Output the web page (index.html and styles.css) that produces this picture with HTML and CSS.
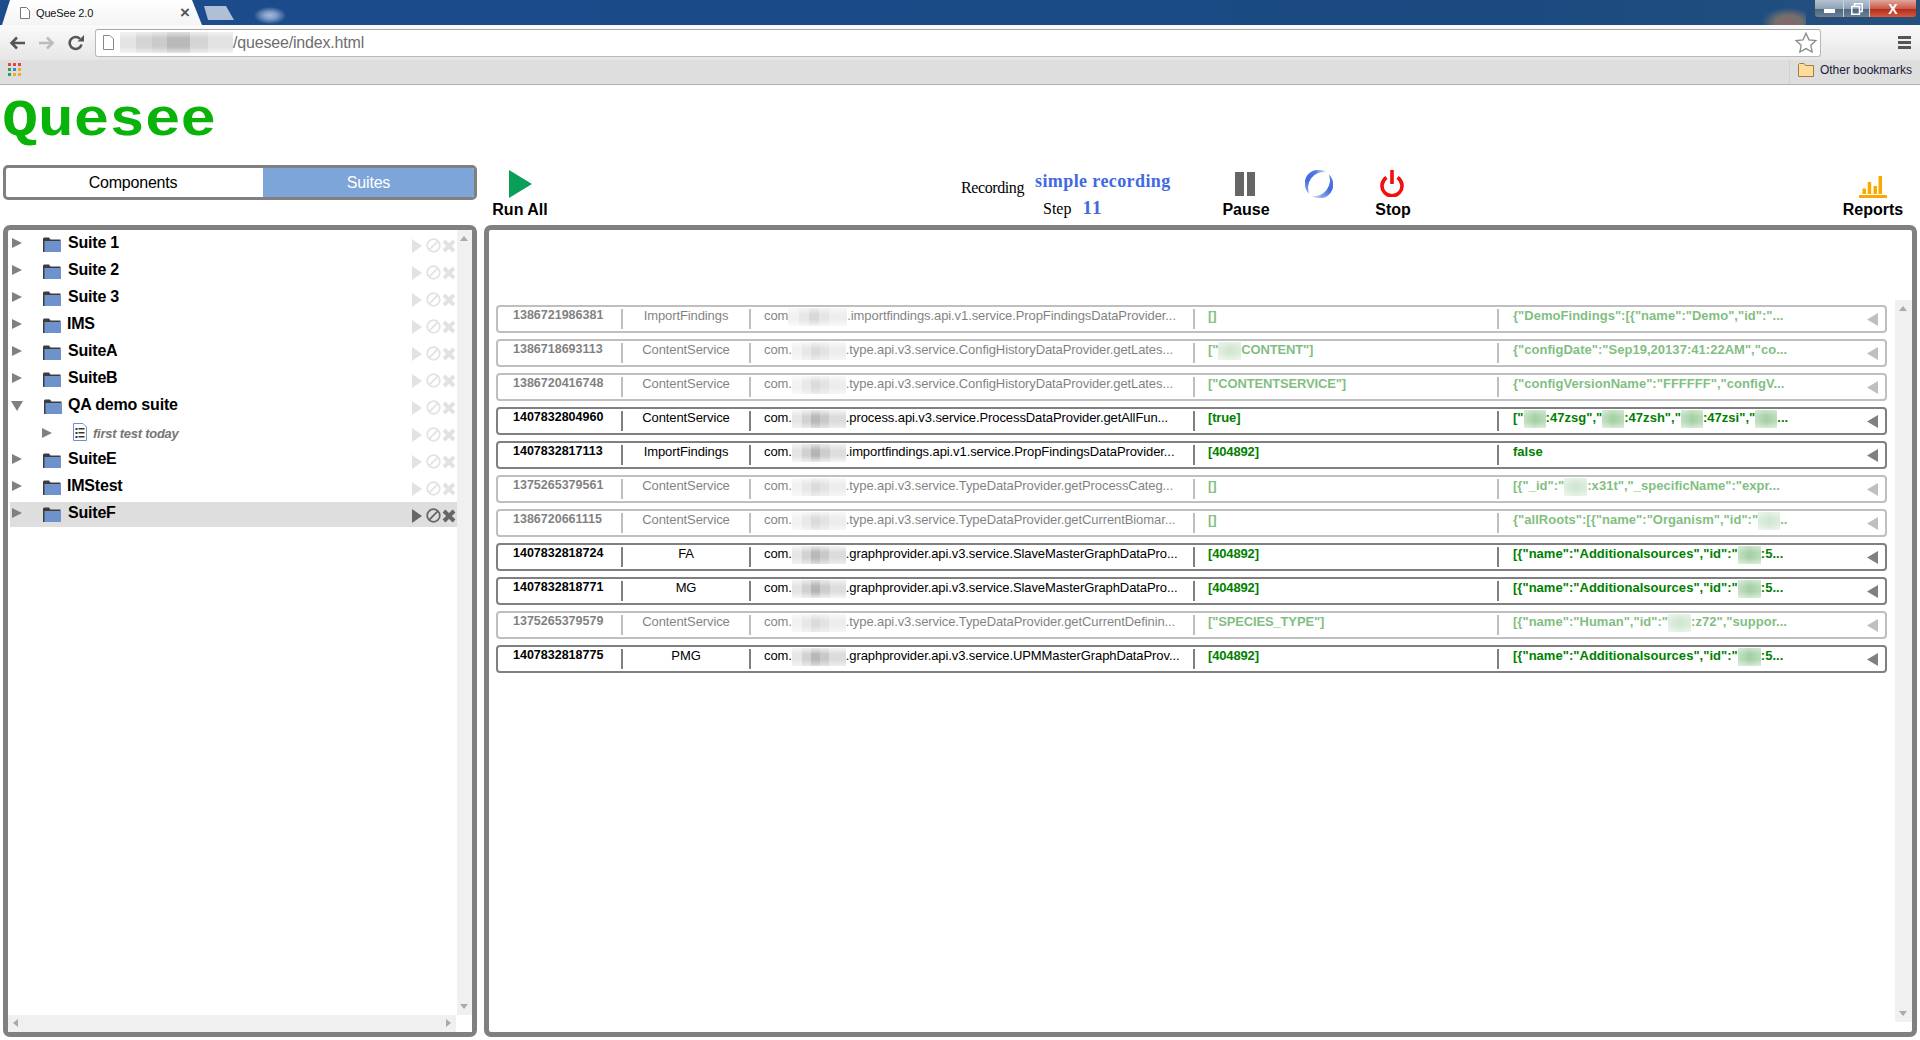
FILE: index.html
```html
<!DOCTYPE html>
<html lang="en">
<head>
<meta charset="utf-8">
<title>QueSee 2.0</title>
<link rel="stylesheet" href="styles.css">
</head>
<body>
<svg class="defs" width="0" height="0" aria-hidden="true">
  <defs>
    <symbol id="folder" viewBox="0 0 18 15"><path fill="#3d3d3d" d="M0 15V1.5L1 0.5H6L7.5 2.5H17.5V4H2V15z"/><rect x="1.5" y="4" width="16.500" height="11" fill="#6d92cc"/></symbol>
    <symbol id="doc" viewBox="0 0 14 18"><path fill="#fff" stroke="#6d92cc" d="M.5.5H10L13.500 4V17.500H.5z"/><path fill="#333" d="M2.500 5h2v2h-2zM5.500 5h6v1.500h-6zM2.500 9h2v2h-2zM5.500 9h6v1.500h-6zM2.500 13h2v2h-2zM5.500 13h6v1.500h-6z"/></symbol>
    <symbol id="a-play" viewBox="0 0 10 14"><path fill="currentColor" d="M0 0L10 7L0 14z"/></symbol>
    <symbol id="a-ban" viewBox="0 0 15 15"><circle cx="7.500" cy="7.500" r="6.300" fill="none" stroke="currentColor" stroke-width="1.800"/><path d="M3.200 11.800L11.800 3.200" stroke="currentColor" stroke-width="1.800"/></symbol>
    <symbol id="a-x" viewBox="0 0 14 14"><path d="M2 2L12 12M12 2L2 12" stroke="currentColor" stroke-width="4"/></symbol>
    <symbol id="collapse" viewBox="0 0 11 13"><path fill="currentColor" d="M11 0V13L0 6.500z"/></symbol>
    <linearGradient id="spinA" x1="0" y1="1" x2="1" y2="0"><stop offset="0" stop-color="#4169e1" stop-opacity=".5"/><stop offset=".35" stop-color="#4169e1"/><stop offset=".7" stop-color="#4169e1" stop-opacity=".9"/><stop offset="1" stop-color="#4169e1" stop-opacity=".15"/></linearGradient>
    <linearGradient id="spinB" x1="1" y1="0" x2="0" y2="1"><stop offset="0" stop-color="#4169e1" stop-opacity=".85"/><stop offset=".4" stop-color="#4169e1"/><stop offset=".75" stop-color="#4169e1" stop-opacity=".6"/><stop offset="1" stop-color="#4169e1" stop-opacity=".12"/></linearGradient>
  </defs>
</svg>

<header class="browser">
  <div class="titlebar">
    <div class="tab">
      <svg class="tab-page" viewBox="0 0 10 12"><path fill="#fff" stroke="#777" d="M.5.5H6.500L9.500 3.500V11.500H.5z"/></svg>
      <span class="tab-title">QueSee 2.0</span>
      <span class="tab-close">×</span>
    </div>
    <div class="newtab"></div>
    <div class="title-blur"></div>
    <div class="title-glow"></div>
    <div class="winbtns">
      <span class="win win-min"></span>
      <span class="win win-max"><svg viewBox="0 0 12 12" width="12" height="12"><path fill="none" stroke="#fff" stroke-width="1.500" d="M3.500 3V.8H11.200V8.500H9M.8 3.500H8.500V11.200H.8z"/></svg></span>
      <span class="win win-close">X</span>
    </div>
  </div>
  <div class="toolbar">
    <svg class="nav" viewBox="0 0 16 14"><path fill="none" stroke="#555" stroke-width="2.600" d="M16 7H3M8 1.500L2.500 7L8 12.500"/></svg>
    <svg class="nav nav-fwd" viewBox="0 0 16 14"><path fill="none" stroke="#bcbcbc" stroke-width="2.600" d="M0 7H13M8 1.500L13.500 7L8 12.500"/></svg>
    <svg class="nav nav-reload" viewBox="0 0 16 16"><path fill="none" stroke="#555" stroke-width="2.600" d="M13.500 9.500A6 6 0 1 1 12 3.800"/><path fill="#555" d="M9.500 6.500H16V0z"/></svg>
    <div class="omnibox">
      <svg class="omni-page" viewBox="0 0 11 15"><path fill="#fff" stroke="#888" d="M.5.500H7L10.500 4V14.500H.5z"/></svg>
      <span class="url-blur"></span>
      <span class="url">/quesee/index.html</span>
      <svg class="star" viewBox="0 0 22 21"><path fill="#fff" stroke="#8a8a8a" stroke-width="1.300" d="M11 1.200L14 7.800L21 8.600L15.800 13.300L17.200 20L11 16.600L4.800 20L6.200 13.300L1 8.600L8 7.800z"/></svg>
    </div>
    <div class="menu"><i></i><i></i><i></i></div>
  </div>
  <div class="bookmarks">
    <div class="apps"><i class="r"></i><i class="r"></i><i class="r"></i><i class="g"></i><i class="b"></i><i class="y"></i><i class="g"></i><i class="y"></i><i class="y"></i></div>
    <div class="other">
      <svg class="bm-folder" viewBox="0 0 16 14"><path fill="#ffdc9a" stroke="#a67c3c" d="M.5 13.500V1.500L1.500.5H6L7.500 2.500H15.500V13.500z"/></svg>
      <span>Other bookmarks</span>
    </div>
  </div>
</header>

<main class="app">
  <div class="logo">Quesee</div>

  <div class="controls">
    <div class="switch">
      <div class="sw sw-on">Components</div>
      <div class="sw sw-active">Suites</div>
    </div>
    <div class="action act-run">
      <svg class="ic-run" viewBox="0 0 23 28"><path fill="#0a9f58" d="M0 0L23 14L0 28z"/></svg>
      <span>Run All</span>
    </div>
    <div class="recording">
      <div class="rec-line"><span class="rec-label">Recording</span><span class="rec-value">simple recording</span></div>
      <div class="rec-line rec-step"><span class="rec-label">Step</span><span class="rec-value">11</span></div>
    </div>
    <div class="action act-pause">
      <svg class="ic-pause" viewBox="0 0 20 24"><path fill="#666" d="M0 0H9V24H0zM12 0H20V24H12z"/></svg>
      <span>Pause</span>
    </div>
    <div class="spinner">
      <svg viewBox="0 0 28 28" width="28" height="28"><path fill="url(#spinA)" d="M4.200 23.800A13.800 13.800 0 0 1 21 2A16 16 0 0 0 4.200 23.800z"/><path fill="url(#spinB)" d="M23.800 4.200A13.800 13.800 0 0 1 7 26A16 16 0 0 0 23.800 4.200z"/></svg>
    </div>
    <div class="action act-stop">
      <svg class="ic-stop" viewBox="0 0 24 27"><path fill="none" stroke="#f40f0f" stroke-width="3.600" d="M6.500 7.500A10 10 0 1 0 17.500 7.500"/><path stroke="#f40f0f" stroke-width="3.600" d="M12 0V14"/></svg>
      <span>Stop</span>
    </div>
    <div class="action act-reports">
      <svg class="ic-reports" viewBox="0 0 28 22"><path fill="#fca800" d="M3.500 12.500H7V18H3.500zM8.700 6H12.200V18H8.700zM14.500 10H18V18H14.500zM19.500 0H23V18H19.500zM0 19H28V22H0z"/></svg>
      <span>Reports</span>
    </div>
  </div>

  <div class="panels">
    <section class="panel tree-panel">
      <div class="tree-body">
        <div class="tree">
          <div class="node"><span class="tog"></span><svg class="fold"><use href="#folder"/></svg><span class="label">Suite 1</span><span class="acts"><svg class="a1"><use href="#a-play"/></svg><svg class="a2"><use href="#a-ban"/></svg><svg class="a3"><use href="#a-x"/></svg></span></div>
          <div class="node"><span class="tog"></span><svg class="fold"><use href="#folder"/></svg><span class="label">Suite 2</span><span class="acts"><svg class="a1"><use href="#a-play"/></svg><svg class="a2"><use href="#a-ban"/></svg><svg class="a3"><use href="#a-x"/></svg></span></div>
          <div class="node"><span class="tog"></span><svg class="fold"><use href="#folder"/></svg><span class="label">Suite 3</span><span class="acts"><svg class="a1"><use href="#a-play"/></svg><svg class="a2"><use href="#a-ban"/></svg><svg class="a3"><use href="#a-x"/></svg></span></div>
          <div class="node"><span class="tog"></span><svg class="fold"><use href="#folder"/></svg><span class="label label-n">IMS</span><span class="acts"><svg class="a1"><use href="#a-play"/></svg><svg class="a2"><use href="#a-ban"/></svg><svg class="a3"><use href="#a-x"/></svg></span></div>
          <div class="node"><span class="tog"></span><svg class="fold"><use href="#folder"/></svg><span class="label">SuiteA</span><span class="acts"><svg class="a1"><use href="#a-play"/></svg><svg class="a2"><use href="#a-ban"/></svg><svg class="a3"><use href="#a-x"/></svg></span></div>
          <div class="node"><span class="tog"></span><svg class="fold"><use href="#folder"/></svg><span class="label">SuiteB</span><span class="acts"><svg class="a1"><use href="#a-play"/></svg><svg class="a2"><use href="#a-ban"/></svg><svg class="a3"><use href="#a-x"/></svg></span></div>
          <div class="node"><span class="tog tog-open"></span><svg class="fold"><use href="#folder"/></svg><span class="label label-n">QA demo suite</span><span class="acts"><svg class="a1"><use href="#a-play"/></svg><svg class="a2"><use href="#a-ban"/></svg><svg class="a3"><use href="#a-x"/></svg></span></div>
          <div class="node node-child"><span class="tog"></span><svg class="docic"><use href="#doc"/></svg><span class="label-child">first test today</span><span class="acts"><svg class="a1"><use href="#a-play"/></svg><svg class="a2"><use href="#a-ban"/></svg><svg class="a3"><use href="#a-x"/></svg></span></div>
          <div class="node"><span class="tog"></span><svg class="fold"><use href="#folder"/></svg><span class="label">SuiteE</span><span class="acts"><svg class="a1"><use href="#a-play"/></svg><svg class="a2"><use href="#a-ban"/></svg><svg class="a3"><use href="#a-x"/></svg></span></div>
          <div class="node"><span class="tog"></span><svg class="fold"><use href="#folder"/></svg><span class="label label-n">IMStest</span><span class="acts"><svg class="a1"><use href="#a-play"/></svg><svg class="a2"><use href="#a-ban"/></svg><svg class="a3"><use href="#a-x"/></svg></span></div>
          <div class="node node-sel"><span class="tog"></span><svg class="fold"><use href="#folder"/></svg><span class="label">SuiteF</span><span class="acts"><svg class="a1"><use href="#a-play"/></svg><svg class="a2"><use href="#a-ban"/></svg><svg class="a3"><use href="#a-x"/></svg></span></div>
        </div>
        <div class="vscroll"><i class="up"></i><i class="down"></i></div>
      </div>
      <div class="tree-foot">
        <div class="hscroll"><i class="left"></i><i class="right"></i></div>
        <div class="corner"></div>
      </div>
    </section>

    <section class="panel log-panel">
      <div class="log">
        <div class="row off"><div class="c c-id">1386721986381</div><div class="c c-svc">ImportFindings</div><div class="c c-m">com<span class="bl bl-1 bl-wide"></span>.importfindings.api.v1.service.PropFindingsDataProvider...</div><div class="c c-p">[]</div><div class="c c-r">{"DemoFindings":[{"name":"Demo","id":"...</div><svg class="col"><use href="#collapse"/></svg></div>
        <div class="row off"><div class="c c-id">1386718693113</div><div class="c c-svc">ContentService</div><div class="c c-m">com.<span class="bl bl-2"></span>.type.api.v3.service.ConfigHistoryDataProvider.getLates...</div><div class="c c-p">["<span class="bg"></span>CONTENT"]</div><div class="c c-r">{"configDate":"Sep19,20137:41:22AM","co...</div><svg class="col"><use href="#collapse"/></svg></div>
        <div class="row off"><div class="c c-id">1386720416748</div><div class="c c-svc">ContentService</div><div class="c c-m">com.<span class="bl bl-2"></span>.type.api.v3.service.ConfigHistoryDataProvider.getLates...</div><div class="c c-p">["CONTENTSERVICE"]</div><div class="c c-r">{"configVersionName":"FFFFFF","configV...</div><svg class="col"><use href="#collapse"/></svg></div>
        <div class="row"><div class="c c-id">1407832804960</div><div class="c c-svc">ContentService</div><div class="c c-m">com.<span class="bl bl-2"></span>.process.api.v3.service.ProcessDataProvider.getAllFun...</div><div class="c c-p">[true]</div><div class="c c-r">["<span class="bg bg-s"></span>:47zsg","<span class="bg bg-s"></span>:47zsh","<span class="bg bg-s"></span>:47zsi","<span class="bg bg-s"></span>...</div><svg class="col"><use href="#collapse"/></svg></div>
        <div class="row"><div class="c c-id">1407832817113</div><div class="c c-svc">ImportFindings</div><div class="c c-m">com.<span class="bl bl-1"></span>.importfindings.api.v1.service.PropFindingsDataProvider...</div><div class="c c-p">[404892]</div><div class="c c-r">false</div><svg class="col"><use href="#collapse"/></svg></div>
        <div class="row off"><div class="c c-id">1375265379561</div><div class="c c-svc">ContentService</div><div class="c c-m">com.<span class="bl bl-2"></span>.type.api.v3.service.TypeDataProvider.getProcessCateg...</div><div class="c c-p">[]</div><div class="c c-r">[{"_id":"<span class="bg"></span>:x31t","_specificName":"expr...</div><svg class="col"><use href="#collapse"/></svg></div>
        <div class="row off"><div class="c c-id">1386720661115</div><div class="c c-svc">ContentService</div><div class="c c-m">com.<span class="bl bl-2"></span>.type.api.v3.service.TypeDataProvider.getCurrentBiomar...</div><div class="c c-p">[]</div><div class="c c-r">{"allRoots":[{"name":"Organism","id":"<span class="bg bg-s"></span>..</div><svg class="col"><use href="#collapse"/></svg></div>
        <div class="row"><div class="c c-id">1407832818724</div><div class="c c-svc">FA</div><div class="c c-m">com.<span class="bl bl-2"></span>.graphprovider.api.v3.service.SlaveMasterGraphDataPro...</div><div class="c c-p">[404892]</div><div class="c c-r">[{"name":"Additionalsources","id":"<span class="bg"></span>:5...</div><svg class="col"><use href="#collapse"/></svg></div>
        <div class="row"><div class="c c-id">1407832818771</div><div class="c c-svc">MG</div><div class="c c-m">com.<span class="bl bl-1"></span>.graphprovider.api.v3.service.SlaveMasterGraphDataPro...</div><div class="c c-p">[404892]</div><div class="c c-r">[{"name":"Additionalsources","id":"<span class="bg"></span>:5...</div><svg class="col"><use href="#collapse"/></svg></div>
        <div class="row off"><div class="c c-id">1375265379579</div><div class="c c-svc">ContentService</div><div class="c c-m">com.<span class="bl bl-2"></span>.type.api.v3.service.TypeDataProvider.getCurrentDefinin...</div><div class="c c-p">["SPECIES_TYPE"]</div><div class="c c-r">[{"name":"Human","id":"<span class="bg"></span>:z72","suppor...</div><svg class="col"><use href="#collapse"/></svg></div>
        <div class="row"><div class="c c-id">1407832818775</div><div class="c c-svc">PMG</div><div class="c c-m">com.<span class="bl bl-2"></span>.graphprovider.api.v3.service.UPMMasterGraphDataProv...</div><div class="c c-p">[404892]</div><div class="c c-r">[{"name":"Additionalsources","id":"<span class="bg"></span>:5...</div><svg class="col"><use href="#collapse"/></svg></div>
      </div>
      <div class="vscroll log-scroll"><i class="up"></i><i class="down"></i></div>
    </section>
  </div>
</main>
</body>
</html>
```

FILE: styles.css
```css
* { box-sizing: border-box; }
html, body { margin: 0; padding: 0; }
body {
  width: 1920px;
  height: 1040px;
  overflow: hidden;
  background: #fff;
  font-family: "Liberation Sans", Arial, sans-serif;
  color: #000;
}
.defs { position: absolute; }

/* Browser chrome */
.titlebar {
  position: relative;
  height: 25px;
  background: linear-gradient(90deg, #1c4c8c 0%, #1a4a88 40%, #1b4a80 80%, #24507f 100%);
  display: flex;
  align-items: flex-end;
}
.tab {
  width: 200px;
  height: 25px;
  margin-left: 2px;
  padding-left: 18px;
  display: flex;
  align-items: center;
  background: linear-gradient(#fff, #f4f4f4);
  border-radius: 6px 6px 0 0;
  clip-path: polygon(0 100%, 8px 0, 190px 0, 100% 100%);
}
.tab-page { width: 10px; height: 12px; flex: none; }
.tab-title { margin-left: 6px; font-size: 11px; letter-spacing: -.15px; color: #111; }
.tab-close { margin-left: auto; margin-right: 12px; font-size: 17px; line-height: 1; color: #555; font-weight: bold; }
.newtab {
  width: 30px;
  height: 14px;
  margin: 0 0 5px 2px;
  background: #aebfd6;
  clip-path: polygon(0 0, 22px 0, 100% 100%, 4px 100%);
}
.title-blur {
  width: 32px;
  height: 17px;
  margin: 0 0 1px 20px;
  background: radial-gradient(ellipse at center, #a7bbd9 0, #7f9bc6 30%, rgba(40, 84, 143, 0) 72%);
}
.title-glow {
  position: absolute;
  left: 1762px;
  top: 8px;
  width: 44px;
  height: 17px;
  opacity: .75;
  background: radial-gradient(ellipse at 60% 85%, #ad6a60 0, #8f7a68 35%, rgba(40, 80, 125, 0) 72%);
}
.winbtns {
  position: absolute;
  right: 3px;
  top: 0;
  height: 18px;
  display: flex;
  border: 1px solid #3a4a5c;
  border-top: 0;
  border-radius: 0 0 4px 4px;
  overflow: hidden;
}
.win { display: flex; align-items: center; justify-content: center; border-left: 1px solid #c9d3dd; height: 100%; }
.win-min { width: 28px; border-left: 0; background: linear-gradient(#b5c3d2, #8ea2b7 50%, #4f6780 55%, #6b8199); }
.win-min::after { content: ""; width: 11px; height: 4px; margin-top: 4px; background: #fff; }
.win-max { width: 26px; background: linear-gradient(#b5c3d2, #8ea2b7 50%, #4f6780 55%, #6b8199); }
.win-close { width: 47px; color: #fff; font-size: 14px; font-weight: bold; background: linear-gradient(#e0a79d, #c95b4a 50%, #b72d1b 55%, #cf5b46); }

.toolbar {
  position: relative;
  height: 35px;
  display: flex;
  align-items: center;
  background: linear-gradient(#fafafa, #e6e6e6);
}
.nav { width: 16px; height: 14px; margin-left: 9px; flex: none; }
.nav-fwd { margin-left: 14px; }
.nav-reload { margin-left: 13px; height: 16px; }
.omnibox {
  width: 1726px;
  height: 28px;
  margin-left: 11px;
  padding-left: 7px;
  display: flex;
  align-items: center;
  background: #fff;
  border: 1px solid #b8b8b8;
  border-top-color: #a8a8a8;
  border-radius: 3px;
}
.omni-page { width: 11px; height: 15px; flex: none; }
.url-blur {
  width: 113px;
  height: 21px;
  margin-left: 6px;
  background:
    linear-gradient(rgba(255,255,255,.55), rgba(255,255,255,0) 30%, rgba(255,255,255,0) 70%, rgba(255,255,255,.6)),
    linear-gradient(90deg, #e4e4e4 0 14%, #d4d4d4 14% 28%, #cbcbcb 28% 42%, #b9b9b9 42% 62%, #d4d4d4 62% 78%, #e2e2e2 78%);
}
.url { font-size: 16px; letter-spacing: -.18px; color: #6e6e6e; }
.star { width: 22px; height: 21px; margin-left: auto; margin-right: 3px; flex: none; }
.menu { display: flex; flex-direction: column; gap: 2px; margin-left: 77px; }
.menu i { display: block; width: 13px; height: 3px; background: #555; }

.bookmarks {
  height: 25px;
  display: flex;
  align-items: flex-start;
  background: #dedede;
  border-bottom: 1px solid #b0b0b0;
}
.apps { width: 13px; height: 13px; margin: 3px 0 0 8px; display: grid; grid-template-columns: repeat(3, 3px); grid-auto-rows: 3px; gap: 2px; }
.apps i { display: block; }
.apps .r { background: #e9453a; }
.apps .g { background: #2f9e58; }
.apps .b { background: #3d82e6; }
.apps .y { background: #f5aa1c; }
.other {
  margin-left: auto;
  height: 24px;
  padding: 3px 8px 0 8px;
  display: flex;
  gap: 6px;
  font-size: 12px;
  line-height: 14px;
  color: #1a1a3a;
  border-left: 1px solid #d2d2d2;
}
.bm-folder { width: 16px; height: 14px; }

/* App */
.app { height: 955px; display: flex; flex-direction: column; }
.logo {
  width: 184px;
  height: 80px;
  flex: none;
  padding: 4px 0 0 2px;
  font-family: "Liberation Mono", "Courier New", monospace;
  font-weight: bold;
  font-size: 51px;
  line-height: 66px;
  color: #0ab30a;
  transform: scaleX(1.165);
  transform-origin: left top;
}
.controls { height: 60px; display: flex; align-items: flex-start; }
.switch {
  width: 474px;
  height: 35px;
  margin-left: 3px;
  display: flex;
  background: #fff;
  border: 3px solid #808080;
  border-radius: 5px;
  flex: none;
}
.sw { display: flex; align-items: center; justify-content: center; font-size: 16px; letter-spacing: -.2px; }
.sw-on { width: 254px; color: #000; }
.sw-active { flex: 1; margin-left: 3px; background: #7da5d8; color: #fff; border-radius: 0 2px 2px 0; }
.action {
  display: flex;
  flex-direction: column;
  align-items: center;
  justify-content: flex-end;
  height: 54px;
  font-size: 16px;
  font-weight: bold;
  line-height: 18px;
  flex: none;
}
.act-run { width: 72px; margin-left: 7px; }
.ic-run { width: 23px; height: 28px; margin-bottom: 3px; }
.recording { width: 209px; margin-left: 405px; flex: none; font-family: "Liberation Serif", "Times New Roman", serif; }
.rec-line { display: flex; align-items: flex-start; white-space: nowrap; }
.rec-label { font-size: 16px; letter-spacing: -.4px; padding-top: 14px; line-height: 18px; }
.rec-value { color: #4169e1; font-weight: bold; font-size: 18px; letter-spacing: .4px; line-height: 22px; margin: 5px 0 0 11px; }
.rec-step { padding-left: 82px; margin-top: -6px; }
.rec-step .rec-label { padding-top: 9px; letter-spacing: 0; }
.rec-step .rec-value { margin: 6px 0 0 11px; font-size: 19px; letter-spacing: 1px; }
.act-pause { width: 60px; margin-left: 46px; }
.ic-pause { width: 20px; height: 24px; margin: 0 2px 5px 0; }
.spinner { width: 28px; height: 28px; margin: 5px 0 0 29px; flex: none; }
.act-stop { width: 60px; margin-left: 30px; }
.ic-stop { width: 24px; height: 27px; margin: 0 2px 4px 0; }
.act-reports { width: 60px; margin-left: auto; margin-right: 17px; }
.ic-reports { width: 28px; height: 22px; margin-bottom: 3px; }

.panels { height: 812px; display: flex; gap: 7px; padding-left: 3px; }
.panel {
  border: 5px solid #808080;
  border-radius: 7px;
  background: #fff;
  display: flex;
  flex: none;
}
.tree-panel { width: 474px; flex-direction: column; }
.log-panel { width: 1433px; }

.tree-body { flex: 1; display: flex; min-height: 0; }
.tree { flex: 1; padding: 2px 0 0 2px; min-width: 0; }
.node {
  height: 25px;
  margin-bottom: 2px;
  display: flex;
  align-items: flex-start;
  position: relative;
}
.tog {
  width: 0;
  height: 0;
  margin: 6px 0 0 2px;
  border-left: 10px solid #808080;
  border-top: 5.500px solid transparent;
  border-bottom: 5.500px solid transparent;
  flex: none;
}
.tog-open {
  margin: 7px 0 0 1px;
  border-top: 10px solid #808080;
  border-bottom: 0;
  border-left: 6px solid transparent;
  border-right: 6px solid transparent;
}
.fold { width: 18px; height: 15px; margin: 5px 0 0 21px; flex: none; }
.label { margin-left: 7px; font-size: 16px; font-weight: bold; letter-spacing: -.2px; line-height: 21px; }
.label-n { margin-left: 6px; }
.node-child .tog { margin-left: 32px; margin-top: 7px; }
.docic { width: 14px; height: 18px; margin: 2px 0 0 21px; flex: none; }
.label-child { margin-left: 6px; margin-top: 5px; font-size: 13px; font-style: italic; font-weight: bold; letter-spacing: -.25px; line-height: 16px; color: #777; }
.acts { margin-left: auto; margin-top: 6px; display: flex; align-items: center; color: #e2e2e2; }
.a1 { width: 10px; height: 14px; }
.a2 { width: 15px; height: 15px; margin-left: 4px; }
.a3 { width: 14px; height: 14px; margin-left: 1px; margin-right: 1px; }
.node-sel { background: #dedede; }
.node-sel .acts { color: #666; }

.vscroll { position: relative; width: 15px; background: #f0f0f0; flex: none; }
.vscroll i { position: absolute; left: 3px; width: 0; height: 0; border-left: 4px solid transparent; border-right: 4px solid transparent; }
.vscroll .up { top: 6px; border-bottom: 5px solid #aaa; }
.vscroll .down { bottom: 6px; border-top: 5px solid #aaa; }
.tree-foot { height: 17px; display: flex; flex: none; }
.hscroll { position: relative; flex: 1; background: #f0f0f0; }
.hscroll i { position: absolute; top: 4px; width: 0; height: 0; border-top: 4px solid transparent; border-bottom: 4px solid transparent; }
.hscroll .left { left: 5px; border-right: 5px solid #aaa; }
.hscroll .right { right: 5px; border-left: 5px solid #aaa; }
.corner { width: 16px; background: #fff; }

.log { flex: 1; padding: 75px 8px 0 7px; min-width: 0; }
.row {
  height: 28px;
  margin-bottom: 6px;
  display: grid;
  grid-template-columns: 123px 128px 444px 304px 1fr;
  position: relative;
  border: 2px solid #808080;
  border-radius: 4px;
  font-size: 13px;
}
.row.off { opacity: .5; }
.c {
  height: 20px;
  margin-top: 2px;
  line-height: 13px;
  white-space: nowrap;
  border-left: 2px solid #808080;
  padding-left: 13px;
}
.c-id { border-left: 0; padding-left: 15px; font-size: 12.500px; font-weight: bold; }
.c-svc { padding-left: 0; text-align: center; letter-spacing: -.1px; }
.c-m { letter-spacing: -.09px; }
.c-p { color: #008000; font-weight: bold; letter-spacing: -.15px; }
.c-r { color: #008000; font-weight: bold; letter-spacing: .03px; padding-left: 14px; }
.col { position: absolute; right: 7px; top: 6px; width: 11px; height: 13px; color: #808080; }
.bl, .bg {
  display: inline-block;
  height: 18px;
  margin: -4px 0;
  vertical-align: middle;
}
.bl { width: 54px; }
.bl-wide { width: 59px; }
.bl-1 {
  background:
    linear-gradient(rgba(255,255,255,.6), rgba(255,255,255,0) 35%, rgba(255,255,255,0) 65%, rgba(255,255,255,.7)),
    linear-gradient(90deg, #e4e4e4 0 18%, #d0d0d0 18% 35%, #b4b4b4 35% 52%, #cccccc 52% 70%, #dedede 70% 100%);
}
.bl-2 {
  background:
    linear-gradient(rgba(255,255,255,.7), rgba(255,255,255,0) 35%, rgba(255,255,255,0) 65%, rgba(255,255,255,.5)),
    linear-gradient(90deg, #e6e6e6 0 18%, #d2d2d2 18% 36%, #b8b8b8 36% 52%, #c8c8c8 52% 68%, #dcdcdc 68% 100%);
}
.bg {
  width: 23px;
  background:
    linear-gradient(rgba(255,255,255,.4), rgba(255,255,255,0) 35%, rgba(255,255,255,0) 65%, rgba(255,255,255,.5)),
    linear-gradient(90deg, #c4e0c4, #a4d0a4 50%, #bcdcbc);
}
.bg-s { width: 22px; }
.log-scroll { width: 17px; margin: 70px 0 10px 0; }
.log-scroll i { left: 4px; }
```
